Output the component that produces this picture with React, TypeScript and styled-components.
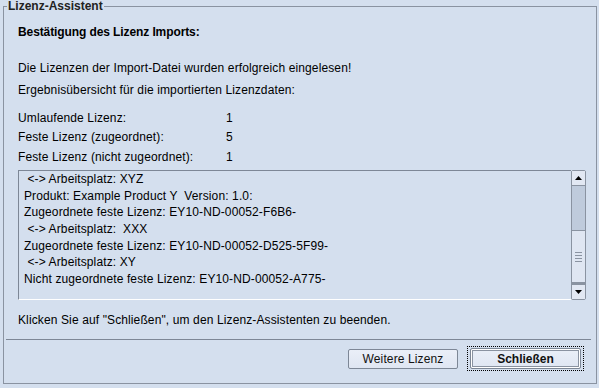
import React from 'react';
import styled, { createGlobalStyle } from 'styled-components';

const GlobalStyle = createGlobalStyle`
  html, body {
    margin: 0;
    padding: 0;
    background: #d4dfee;
  }
  body {
    font-family: 'Liberation Sans', Arial, sans-serif;
    font-size: 12px;
    color: #000;
  }
`;

const Page = styled.div`
  width: 599px;
  height: 388px;
  overflow: hidden;
  background: #d4dfee;
`;

const Frame = styled.fieldset`
  box-sizing: border-box;
  width: 594px;
  height: 384px;
  margin: 0 0 0 3px;
  padding: 0;
  border: 1px solid #8a93a1;
  min-inline-size: 0;
  display: flex;
  flex-direction: column;
`;

const Legend = styled.legend`
  font-weight: bold;
  font-size: 12px;
  line-height: 13px;
  padding: 0 1px;
  margin-left: 3px;
  color: #222;
`;

const Body = styled.div`
  padding: 0 10px 0 14px;
  display: flex;
  flex-direction: column;
  letter-spacing: 0.12px;
`;

const Line = styled.div<{ $top: number; $bold?: boolean }>`
  margin-top: ${(p) => p.$top}px;
  line-height: 16px;
  height: 16px;
  font-weight: ${(p) => (p.$bold ? 'bold' : 'normal')};
  letter-spacing: ${(p) => (p.$bold ? '-0.1px' : 'inherit')};
  white-space: nowrap;
`;

const StatRow = styled.div<{ $top: number }>`
  margin-top: ${(p) => p.$top}px;
  display: grid;
  grid-template-columns: 208px 1fr;
  line-height: 16px;
  height: 16px;
`;

const ScrollPane = styled.div`
  margin-top: 5px;
  height: 130px;
  display: flex;
`;

const TextView = styled.div`
  flex: 1;
  border-top: 1px solid #7d8796;
  border-left: 1px solid #7d8796;
  border-bottom: 1px solid #ffffff;
  padding: 0 0 0 5px;
  overflow: hidden;
`;

const TextLine = styled.div`
  line-height: 16.67px;
  height: 16.67px;
  white-space: pre;
`;

const ScrollBar = styled.div`
  width: 15px;
  box-sizing: border-box;
  border: 1px solid #8a93a1;
  border-radius: 2px;
  display: flex;
  flex-direction: column;
  background: #bfcbdc;
`;

const ArrowButton = styled.div<{ $down?: boolean }>`
  height: 14px;
  background: #e2e8f3;
  display: flex;
  align-items: center;
  justify-content: center;
  ${(p) => (p.$down ? 'border-top: 1px solid #8a93a1;' : 'border-bottom: 1px solid #8a93a1;')}
`;

const Track = styled.div`
  flex: 1;
  display: flex;
  flex-direction: column;
  justify-content: flex-end;
`;

const Thumb = styled.div`
  height: 51px;
  background: #dfe6f2;
  border-top: 1px solid #8a93a1;
  border-bottom: 2px solid #8a93a1;
  display: flex;
  flex-direction: column;
  align-items: center;
  justify-content: center;
  gap: 2px;
`;

const Grip = styled.span`
  display: block;
  width: 7px;
  height: 1px;
  background: #8a93a1;
`;

const Separator = styled.div`
  margin: 11px 5px 0 2px;
  border-top: 1px solid #7d8796;
`;

const ButtonBar = styled.div`
  display: flex;
  justify-content: flex-end;
  align-items: center;
  gap: 10px;
  padding: 7px 13px 0 0;
`;

const Button = styled.button<{ $primary?: boolean }>`
  box-sizing: border-box;
  font-family: 'Liberation Sans', Arial, sans-serif;
  font-size: 12px;
  font-weight: ${(p) => (p.$primary ? 'bold' : 'normal')};
  letter-spacing: ${(p) => (p.$primary ? '0' : '0.12px')};
  color: #111;
  height: ${(p) => (p.$primary ? '21px' : '20px')};
  width: ${(p) => (p.$primary ? '111px' : '110px')};
  padding: 0;
  background: linear-gradient(#eaeff8, #dfe6f2);
  border: 1px solid #7d8796;
  border-radius: 2px;
  box-shadow: ${(p) =>
    p.$primary ? 'inset 0 0 0 1px #ffffff, inset 0 0 0 2px #8a93a1' : 'none'};
`;

const FocusRing = styled.div`
  padding: 1px 2px 1px 2px;
  outline: 1px dotted #000;
  outline-offset: 0;
  display: flex;
`;

const Arrow: React.FC<{ down?: boolean }> = ({ down }) => (
  <svg width="7" height="4" viewBox="0 0 7 4">
    <polygon points={down ? '0,0 7,0 3.5,4' : '3.5,0 7,4 0,4'} fill="#000" />
  </svg>
);

const stats = [
  { label: 'Umlaufende Lizenz:', value: '1', top: 12 },
  { label: 'Feste Lizenz (zugeordnet):', value: '5', top: 3 },
  { label: 'Feste Lizenz (nicht zugeordnet):', value: '1', top: 4 },
];

const details = [
  ' <-> Arbeitsplatz: XYZ',
  'Produkt: Example Product Y  Version: 1.0:',
  'Zugeordnete feste Lizenz: EY10-ND-00052-F6B6-',
  ' <-> Arbeitsplatz:  XXX',
  'Zugeordnete feste Lizenz: EY10-ND-00052-D525-5F99-',
  ' <-> Arbeitsplatz: XY',
  'Nicht zugeordnete feste Lizenz: EY10-ND-00052-A775-',
];

export default function App() {
  return (
    <Page>
      <GlobalStyle />
      <Frame>
        <Legend>Lizenz-Assistent</Legend>
        <Body>
          <Line $top={11} $bold>
            Bestätigung des Lizenz Imports:
          </Line>
          <Line $top={20}>Die Lizenzen der Import-Datei wurden erfolgreich eingelesen!</Line>
          <Line $top={6}>Ergebnisübersicht für die importierten Lizenzdaten:</Line>
          {stats.map((s) => (
            <StatRow key={s.label} $top={s.top}>
              <span>{s.label}</span>
              <span>{s.value}</span>
            </StatRow>
          ))}
          <ScrollPane>
            <TextView>
              {details.map((d, i) => (
                <TextLine key={i}>{d}</TextLine>
              ))}
            </TextView>
            <ScrollBar>
              <ArrowButton>
                <Arrow />
              </ArrowButton>
              <Track>
                <Thumb>
                  <Grip />
                  <Grip />
                  <Grip />
                  <Grip />
                </Thumb>
              </Track>
              <ArrowButton $down>
                <Arrow down />
              </ArrowButton>
            </ScrollBar>
          </ScrollPane>
          <Line $top={12}>Klicken Sie auf "Schließen", um den Lizenz-Assistenten zu beenden.</Line>
        </Body>
        <Separator />
        <ButtonBar>
          <Button>Weitere Lizenz</Button>
          <FocusRing>
            <Button $primary>Schließen</Button>
          </FocusRing>
        </ButtonBar>
      </Frame>
    </Page>
  );
}
